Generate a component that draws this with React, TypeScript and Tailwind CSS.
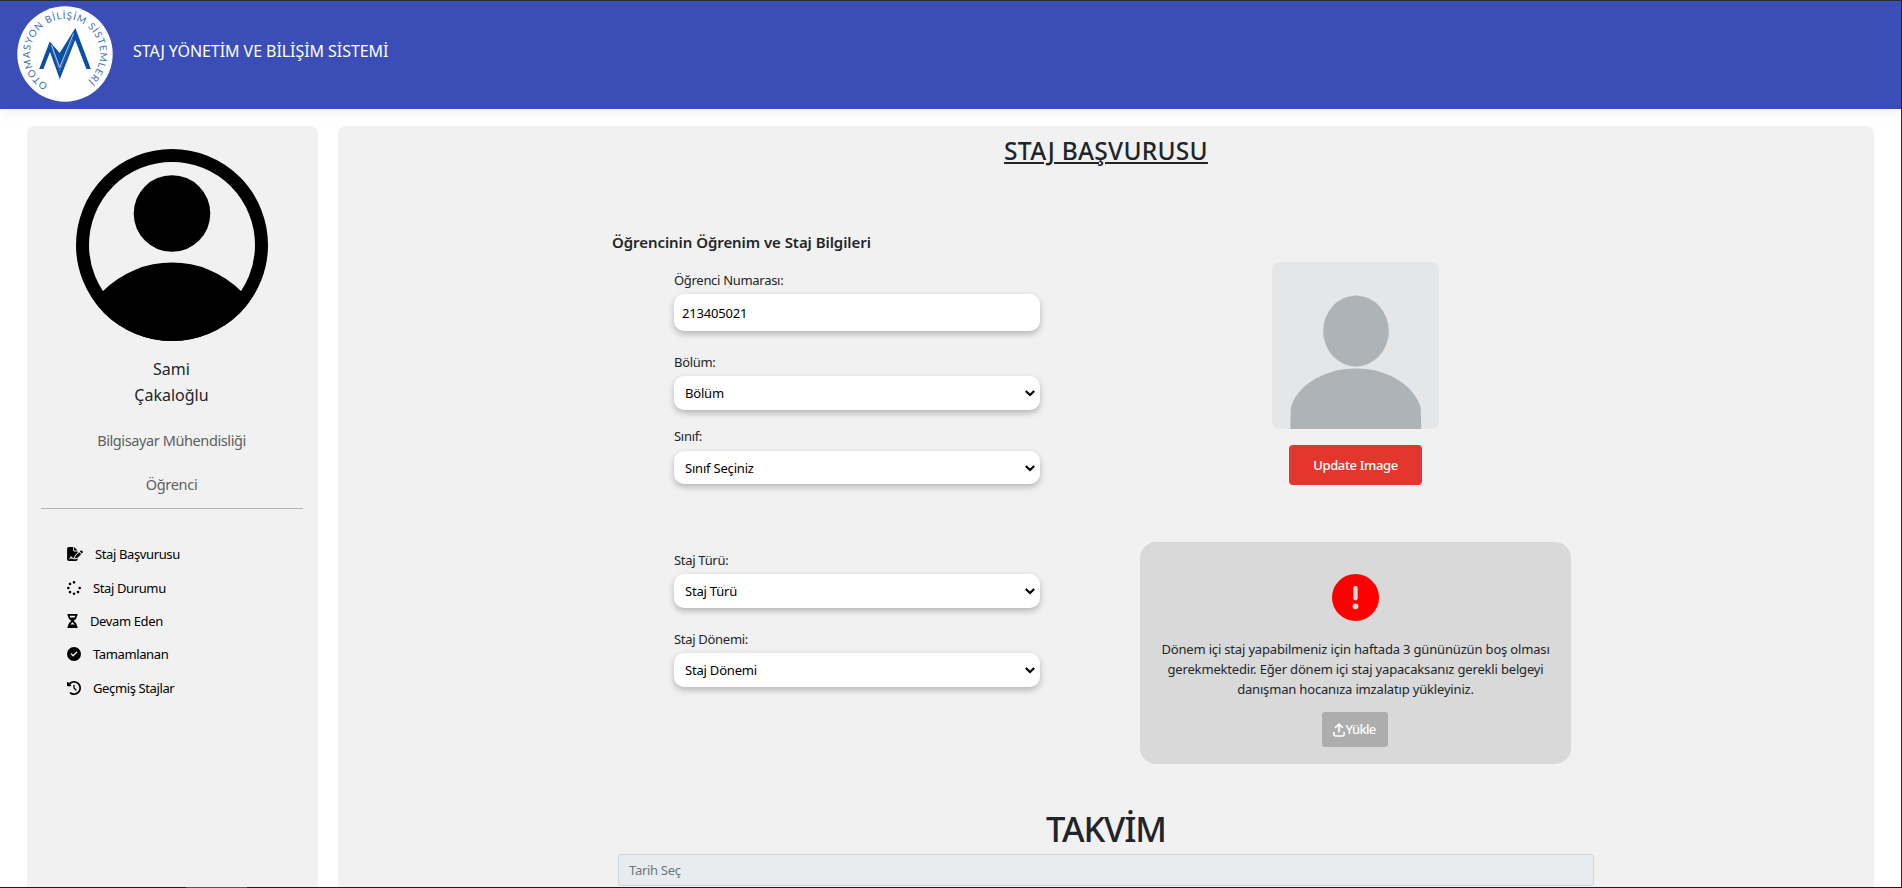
import type { ReactNode } from "react";
import {
  FaFileSignature,
  FaSpinner,
  FaHourglassHalf,
  FaCircleCheck,
  FaClockRotateLeft,
  FaCircleExclamation,
  FaArrowUpFromBracket,
} from "react-icons/fa6";

const fieldShadow = "shadow-[0_3px_6px_rgba(0,0,0,0.25)]";

function Logo() {
  return (
    <svg viewBox="0 0 96 96" className="h-24 w-24">
      <circle cx="48" cy="48" r="47.7" fill="#fff" />
      <defs>
        <path id="ring" d="M 31 78.6 A 35 35 0 1 1 70.5 74.8" fill="none" />
      </defs>
      <text fill="#3a72b8" fontSize="9.8" fontFamily="Lato, sans-serif">
        <textPath href="#ring" textLength="177" lengthAdjust="spacing">
          OTOMASYON BİLİŞİM SİSTEMLERİ
        </textPath>
      </text>
      <path
        d="M22.2 63 L32.7 35.5 L42.7 47 L58.4 22 L73.8 63 H69.4 L58.2 34 L42.8 73.3 L33 46 L26.4 63 Z"
        fill="#0a4ea8"
      />
      <path d="M34.5 39 L42.7 61.5 L56.5 27.5" fill="none" stroke="#fff" strokeWidth="0.7" />
      <path d="M35 43 L42.7 65 L56 33" fill="none" stroke="#fff" strokeOpacity="0.4" strokeWidth="0.5" />
    </svg>
  );
}

function Avatar() {
  return (
    <svg viewBox="0 0 192 192" className="mt-[23px] h-48 w-48">
      <defs>
        <clipPath id="disc">
          <circle cx="96" cy="96" r="96" />
        </clipPath>
      </defs>
      <circle cx="96" cy="96" r="89.5" fill="none" stroke="#000" strokeWidth="13" />
      <circle cx="96" cy="64.5" r="38.3" />
      <circle cx="96" cy="211" r="97.5" clipPath="url(#disc)" />
    </svg>
  );
}

function Placeholder() {
  return (
    <svg viewBox="0 0 167 167" className="mt-[30px] h-[167px] w-[167px] rounded-lg bg-[#e4e6e8]">
      <ellipse cx="84" cy="69" rx="32.8" ry="35.5" fill="#aeb3b7" />
      <path d="M18.3 167 L18.8 146 C24 125 50 106.5 84 106.5 C118 106.5 143 125 148.7 146 L149.3 167 Z" fill="#aeb3b7" />
    </svg>
  );
}

function MenuItem({ icon, label, className }: { icon: ReactNode; label: string; className: string }) {
  return (
    <li className={`flex items-center text-[13px] leading-5 tracking-[-0.38px] text-black ${className}`}>
      {icon}
      <span>{label}</span>
    </li>
  );
}

function SelectField({ label, value, className, box }: { label: string; value: string; className: string; box: string }) {
  return (
    <div className={className}>
      <label className="block text-[13px] leading-5 tracking-[-0.3px]">{label}</label>
      <div className={`relative w-[366px] ${box}`}>
        <select
          className={`block h-full w-full appearance-none rounded-[10px] bg-white px-[11px] pt-0.5 text-[13px] tracking-[-0.2px] text-black ${fieldShadow}`}
        >
          <option>{value}</option>
        </select>
        <svg viewBox="0 0 10 7" className="pointer-events-none absolute top-[14px] right-[5px] h-[7px] w-[10px]">
          <path d="M0.8 1 L5 5 L9.2 1" fill="none" stroke="#000" strokeWidth="2.2" />
        </svg>
      </div>
    </div>
  );
}

export default function App() {
  return (
    <div className="flex h-[888px] w-[1902px] flex-col overflow-hidden border-t border-r border-[#2b2b33] bg-white font-['Noto_Sans',sans-serif] text-[#212529]">
      <header className="flex h-[108px] shrink-0 items-start bg-[#3b4eb8] shadow-[0_4px_12px_rgba(0,0,0,0.06)]">
        <div className="mt-[5px] ml-[17px]">
          <Logo />
        </div>
        <h1 className="mt-[38px] ml-5 text-[16px] leading-6 tracking-[-0.06px] whitespace-nowrap text-white">
          STAJ YÖNETİM VE BİLİŞİM SİSTEMİ
        </h1>
      </header>

      <div className="mt-[17px] flex min-h-0 flex-1 gap-5 pr-[27px] pl-[27px]">
        <aside className="flex w-[291px] flex-col items-center rounded-t-lg bg-[#f1f1f1] pr-0.5">
          <Avatar />
          <p className="mt-[15px] text-center text-[16px] leading-[26px]">
            Sami
            <br />
            Çakaloğlu
          </p>
          <p className="mt-5 text-[14.5px] leading-6 tracking-[-0.4px] text-[#5c5f62]">Bilgisayar Mühendisliği</p>
          <p className="mt-5 text-[14.5px] leading-6 tracking-[-0.3px] text-[#5c5f62]">Öğrenci</p>
          <hr className="mt-3 w-[262px] border-[#b3b3b3]" />
          <ul className="mt-[35px] w-full pl-10">
            <MenuItem icon={<FaFileSignature className="mr-3 h-[14px] w-[16px]" />} label="Staj Başvurusu" className="" />
            <MenuItem icon={<FaSpinner className="mr-3 h-[14px] w-[14px]" />} label="Staj Durumu" className="mt-[14px]" />
            <MenuItem icon={<FaHourglassHalf className="mr-3 h-[14px] w-[11px]" />} label="Devam Eden" className="mt-[13px]" />
            <MenuItem icon={<FaCircleCheck className="mr-3 h-[14px] w-[14px]" />} label="Tamamlanan" className="mt-[13px]" />
            <MenuItem icon={<FaClockRotateLeft className="mr-3 h-[14px] w-[14px]" />} label="Geçmiş Stajlar" className="mt-[14px]" />
          </ul>
        </aside>

        <main className="flex flex-1 flex-col items-center rounded-t-lg bg-[#f1f1f1]">
          <h2 className="mt-[10px] text-[24.5px] leading-[29px] font-medium tracking-[0.27px] underline decoration-2 underline-offset-[2px]">
            STAJ BAŞVURUSU
          </h2>

          <div className="mt-[67px] flex w-full justify-start pl-[274px]">
            <section className="w-[528px]">
              <h3 className="text-[15px] leading-5 font-semibold tracking-[-0.06px]">Öğrencinin Öğrenim ve Staj Bilgileri</h3>
              <div className="pl-[62px]">
                <label className="mt-[18px] block text-[13px] leading-5 tracking-[-0.3px]">Öğrenci Numarası:</label>
                <input
                  className={`mt-1 block h-[37px] w-[366px] rounded-[10px] bg-white px-2 text-[13px] tracking-[-0.2px] text-black ${fieldShadow}`}
                  defaultValue="213405021"
                />
                <SelectField label="Bölüm:" value="Bölüm" className="mt-[21px]" box="mt-1 h-[34px]" />
                <SelectField label="Sınıf:" value="Sınıf Seçiniz" className="mt-4" box="mt-[5px] h-[33px]" />
                <SelectField label="Staj Türü:" value="Staj Türü" className="mt-[66px]" box="mt-1 h-[34px]" />
                <SelectField label="Staj Dönemi:" value="Staj Dönemi" className="mt-[21px]" box="mt-1 h-[34px]" />
              </div>
            </section>

            <section className="flex w-[431px] flex-col items-center">
              <Placeholder />
              <button className="mt-4 h-10 w-[133px] rounded bg-[#e3362d] pt-px text-[13px] font-medium tracking-[-0.36px] text-white">
                Update Image
              </button>
              <div className="mt-[57px] flex h-[222px] w-full flex-col items-center rounded-2xl bg-[#d9d9d9]">
                <FaCircleExclamation className="mt-8 h-[47px] w-[47px] text-[#ff0000]" />
                <p className="mt-[18px] text-center text-[13px] leading-5 tracking-[-0.17px] whitespace-nowrap">
                  Dönem içi staj yapabilmeniz için haftada 3 gününüzün boş olması
                  <br />
                  gerekmektedir. Eğer dönem içi staj yapacaksanız gerekli belgeyi
                  <br />
                  danışman hocanıza imzalatıp yükleyiniz.
                </p>
                <button className="mt-[13px] mr-0.5 flex h-[35px] w-[66px] items-center justify-center rounded-[3px] bg-[#adadad] text-[13px] font-medium tracking-[-0.7px] text-white">
                  <FaArrowUpFromBracket className="h-[14px] w-[12px]" />
                  Yükle
                </button>
              </div>
            </section>
          </div>

          <h2 className="mt-[45px] text-[34.5px] leading-10 font-medium tracking-[-1.1px]">TAKVİM</h2>
          <input
            className="mt-[5px] h-8 w-[976px] shrink-0 rounded-[3px] border border-[#ced4da] bg-[#e9ecef] px-[10px] text-[13px] tracking-[-0.3px] placeholder:text-[#6c757d]"
            placeholder="Tarih Seç"
            readOnly
          />
        </main>
      </div>

      <footer className="flex h-px shrink-0 bg-[#1c1c1c]">
        <span className="ml-[186px] w-[61px] bg-[#555]" />
      </footer>
    </div>
  );
}
